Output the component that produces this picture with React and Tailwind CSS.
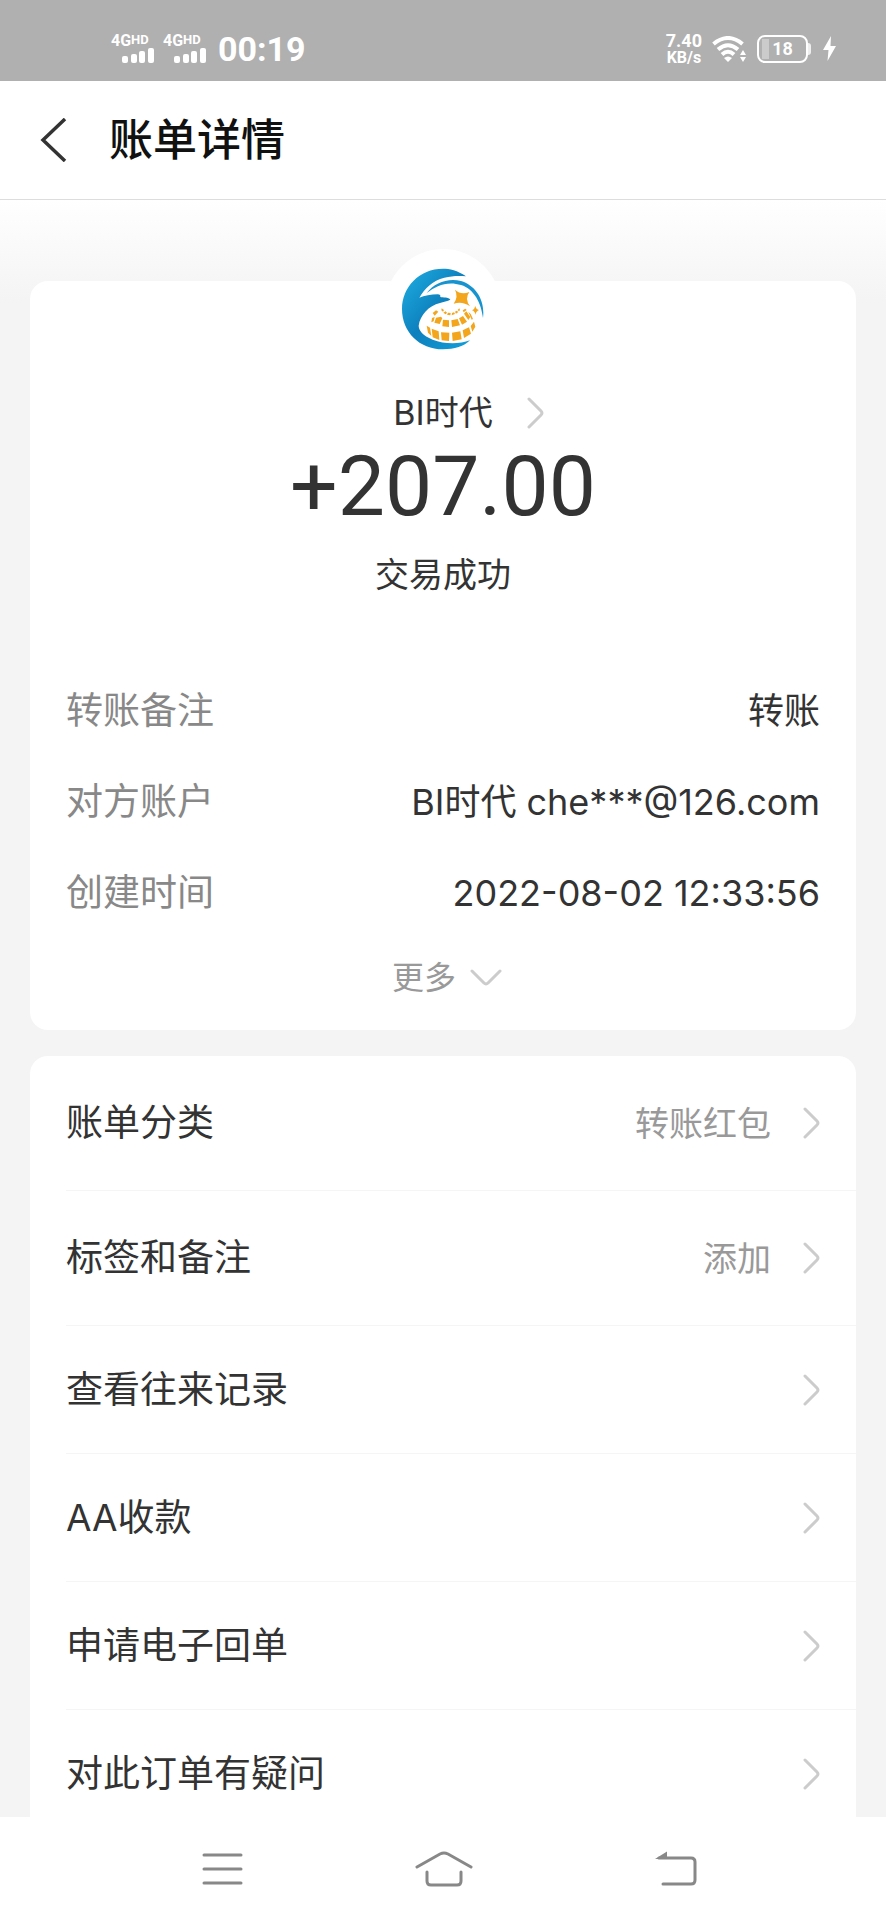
import React, { useState } from 'react';
import clsx from 'clsx';

const details = [
  { label: '转账备注', value: '转账' },
  { label: '对方账户', value: 'BI时代 che***@126.com' },
  { label: '创建时间', value: '2022-08-02 12:33:56' },
];

const menuItems = [
  { label: '账单分类', value: '转账红包', tall: true },
  { label: '标签和备注', value: '添加', tall: true },
  { label: '查看往来记录' },
  { label: 'AA收款' },
  { label: '申请电子回单' },
  { label: '对此订单有疑问' },
];

function Chevron({ className }) {
  return (
    <svg viewBox="0 0 17 32" fill="none" className={clsx('w-[17px] h-8 shrink-0', className)}>
      <path d="M2 2 L14 14 Q16 16 14 18 L2 30" stroke="#cccccc" strokeWidth="3" strokeLinecap="round" />
    </svg>
  );
}

function Signal() {
  return (
    <div className="flex flex-col w-[45px]">
      <div className="flex items-start font-bold leading-[14px] text-[16px]">
        4G<span className="text-[13px] leading-[11px]">HD</span>
      </div>
      <svg viewBox="0 0 32 15" className="mr-0.5 w-8 h-[15px] self-end" fill="white">
        <rect x="0" y="8" width="6" height="7" rx="2" />
        <rect x="9" y="6" width="6" height="9" rx="2" />
        <rect x="17" y="3" width="6" height="12" rx="2" />
        <rect x="26" y="0" width="6" height="15" rx="2" />
      </svg>
    </div>
  );
}

function StatusBar() {
  return (
    <div className="h-[81px] shrink-0 bg-[#b0b0b0] text-white pl-[111px] pr-[50px] pt-4 flex items-center justify-between font-[Roboto,sans-serif]">
      <div className="flex items-center">
        <Signal />
        <div className="w-[7px]" />
        <Signal />
        <span className="ml-2.5 text-[34px] leading-9 font-bold">00:19</span>
      </div>
      <div className="flex items-center">
        <div className="text-center font-bold">
          <div className="text-[18px] leading-[17px]">7.40</div>
          <div className="text-[16px] leading-[17px]">KB/s</div>
        </div>
        <svg viewBox="0 0 35 26" className="ml-2.5 w-[35px] h-[26px]" fill="none">
          <path d="M1.500 8 Q16 -4 30.500 8" stroke="white" strokeWidth="4" />
          <path d="M6 13.500 Q16 5 26 13.500" stroke="white" strokeWidth="4" />
          <path d="M10 18.500 Q16 13 22 18.500" stroke="white" strokeWidth="4" />
          <path d="M12 22 Q16 19 20 22 L16 26Z" fill="white" />
          <path d="M31 14 L34 19 H28Z M31 26 L34 21 H28Z" fill="white" />
        </svg>
        <div className="ml-2.5 flex items-center">
          <div className="relative w-[51px] h-7 border-2 border-white rounded-lg flex items-center justify-center text-[18px] font-bold">
            <span className="absolute left-[3px] inset-y-0.5 w-[7px] bg-white/35" />
            18
          </div>
          <span className="w-[3px] h-3 bg-white/80 rounded-r" />
        </div>
        <svg viewBox="0 0 13 25" className="ml-3 w-[13px] h-[25px]" fill="white">
          <path d="M8 0 L0 14 H5.500 L4.500 25 L13 10 H7.500Z" />
        </svg>
      </div>
    </div>
  );
}

function Logo() {
  return (
    <svg viewBox="98 84 246 244" className="w-[82px] h-[82px]">
      <defs>
        <linearGradient id="wave" x1="0" y1="0" x2="1" y2="1">
          <stop offset="0" stopColor="#1fb0e2" />
          <stop offset="0.5" stopColor="#0d80bd" />
          <stop offset="1" stopColor="#12a0da" />
        </linearGradient>
      </defs>
      <path
        fill="url(#wave)"
        d="M290 108 C265 90 240 85 221 85 C150 85 98 140 98 206 C98 275 150 327 221 327 C255 327 285 318 302 300 C270 312 225 312 190 298 C160 285 148 270 148 256 C152 225 178 196 212 188 C222 184 235 183 243 178 C238 170 220 172 213 170 C214 165 212 162 205 162 C185 162 165 166 150 172 C165 145 190 120 225 112 C250 106 270 106 290 108Z"
      />
      <path
        fill="#1794d0"
        d="M172 158 C195 128 235 112 275 122 C318 135 348 178 341 233 C336 190 315 146 275 134 C235 121 200 136 172 158Z"
      />
      <g fill="#f3a51c">
        <path d="M257 148 Q275 165 300 155 Q285 175 302 198 Q280 182 253 190 Q268 170 257 148Z" />
        <path d="M318 197 Q320 207 329 209 Q320 212 319 223 Q316 212 308 210 Q316 207 318 197Z" />
        <path d="M217 204 L224 209 L221 214 L216 210Z M222 217 L229 213 L233 217 L229 222Z M233 223 L236 217 L244 218 L243 225Z M247 225 L248 218 L254 216 L257 221Z M260 220 L257 214 L262 211 L267 215Z M265 209 L270 204 L272 209 L269 213Z" />
        <path d="M190 218 L200 210 L207 214 L196 226Z M188 233 L196 230 L193 243 L186 246Z M200 232 L215 229 L219 234 L211 251 L195 247Z M221 238 L239 240 L239 260 L219 258 Z M246 240 L265 236 L272 255 L248 260Z M269 234 L281 227 L293 244 L278 253Z M284 220 L291 213 L303 230 L297 239Z M280 210 L288 205 L292 209 L283 216Z M297 214 L304 221 L311 236 L307 238Z" />
        <path d="M172 256 L182 262 L186 287 L176 277Z M187 265 L208 273 L210 299 L190 291Z M215 276 L240 277 L239 302 L217 300Z M248 277 L273 273 L277 297 L250 302Z M280 270 L299 261 L305 280 L284 293Z M304 257 L314 244 L318 259 L309 274Z" />
      </g>
    </svg>
  );
}

function App() {
  const [expanded, setExpanded] = useState(false);

  return (
    <div className="h-screen flex flex-col bg-[#f4f4f4] text-[#333333] font-[Inter,'Noto_Sans_CJK_SC',sans-serif]">
      <StatusBar />

      <header className="h-[119px] shrink-0 bg-white border-b border-[#dddddd] flex items-center pl-10">
        <button aria-label="返回" className="w-[27px]">
          <svg viewBox="0 0 27 44" fill="none" className="w-[27px] h-11">
            <path d="M25 1 L3 22 L25 43" stroke="#333333" strokeWidth="3.500" />
          </svg>
        </button>
        <h1 className="ml-[42px] text-[44px] leading-[60px] font-medium text-[#111111]">账单详情</h1>
      </header>

      <main className="flex-1 min-h-0 overflow-y-auto [scrollbar-width:none]">
        <div className="px-[30px] pt-[81px] bg-linear-to-b from-white to-[#f4f4f4] to-[100px]">
          <section className="bg-white rounded-[18px] flex flex-col items-center px-9 pb-7">
            <div className="-mt-8 size-[116px] pt-1 rounded-full bg-white flex items-center justify-center">
              <Logo />
            </div>
            <button className="w-full mt-6 grid grid-cols-[1fr_auto_1fr] items-center text-[34px] leading-12">
              <span className="col-start-2">BI时代</span>
              <Chevron className="ml-[34px]" />
            </button>
            <p className="mt-0.5 text-[84px] leading-[96px] font-[Roboto,sans-serif]">+207.00</p>
            <p className="mt-4 text-[34px] leading-12">交易成功</p>

            <dl className="w-full mt-[66px]">
              {details.map((item) => (
                <div key={item.label} className="h-[91px] flex items-center justify-between text-[37px]">
                  <dt className="text-[#888888]">{item.label}</dt>
                  <dd className="text-[36px]">{item.value}</dd>
                </div>
              ))}
            </dl>

            <button
              className="mt-4 ml-2 flex items-center gap-3.5 text-[32px] leading-12 text-[#999999]"
              aria-expanded={expanded}
              onClick={() => setExpanded(!expanded)}
            >
              更多
              <svg viewBox="0 0 32 18" fill="none" className="w-8 h-[18px]">
                <path d="M2 2 L14 14 Q16 16 18 14 L30 2" stroke="#cccccc" strokeWidth="3" strokeLinecap="round" />
              </svg>
            </button>
          </section>
        </div>

        <div className="px-[30px] pt-[26px]">
          <nav className="bg-white rounded-[18px] pl-9">
            {menuItems.map((item) => (
              <a
                key={item.label}
                href="#"
                className={clsx(
                  'flex items-center pr-9 border-b border-[#f5f5f5] text-[37px]',
                  item.tall ? 'h-[135px]' : 'h-32'
                )}
              >
                <span className="flex-1">{item.label}</span>
                {item.value && <span className="text-[34px] text-[#999999]">{item.value}</span>}
                <Chevron className="ml-8" />
              </a>
            ))}
          </nav>
        </div>
      </main>

      <footer className="h-[103px] shrink-0 bg-white pl-[202px] pr-[189px] flex items-center justify-between">
        <button aria-label="最近任务">
          <svg viewBox="0 0 41 36" fill="none" className="w-[41px] h-9" stroke="#888888" strokeWidth="3" strokeLinecap="round">
            <path d="M2 4 H39 M2 18 H39 M2 32 H39" />
          </svg>
        </button>
        <button aria-label="主屏幕" className="pr-2.5">
          <svg viewBox="0 0 58 36" fill="none" className="w-[58px] h-9" stroke="#888888" strokeWidth="3" strokeLinecap="round">
            <path d="M2 16 L25 3 Q29 1 33 3 L56 16" />
            <path d="M12 21 V30 Q12 34 16 34 H42 Q46 34 46 30 V21" />
          </svg>
        </button>
        <button aria-label="返回上一级">
          <svg viewBox="0 0 42 36" fill="none" className="w-[42px] h-9" stroke="#888888" strokeWidth="3" strokeLinecap="round">
            <path d="M8 33 H36 Q40 33 40 29 V11 Q40 7 36 7 H4" />
            <path d="M0 8 L12 0.500 V8Z" fill="#888888" stroke="none" />
          </svg>
        </button>
      </footer>
    </div>
  );
}

export default App;
